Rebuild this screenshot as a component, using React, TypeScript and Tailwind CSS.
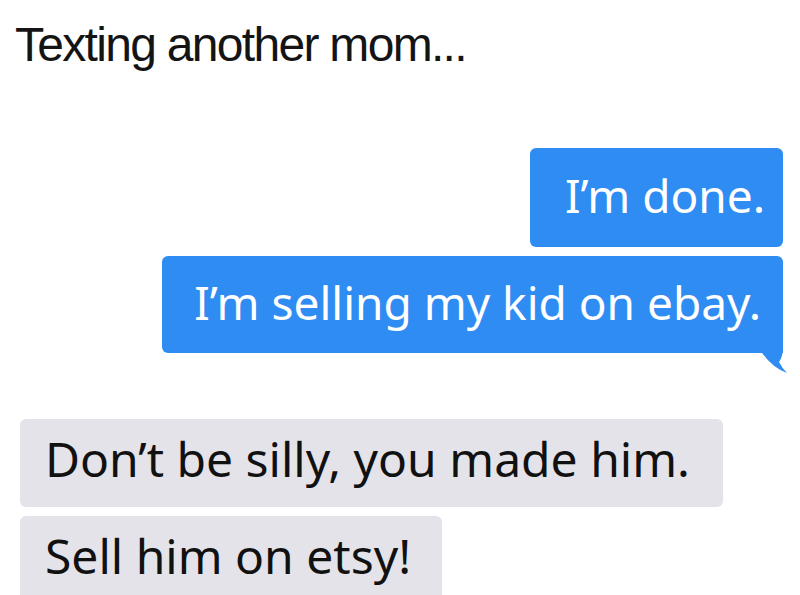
import React from "react";

const bubbleFont = { fontFamily: '"Noto Sans", "Open Sans", sans-serif' };

export default function App() {
  return (
    <div className="w-[800px] h-[595px] overflow-hidden bg-white">
      <div
        className="pl-[15px] pt-[21px] text-[48px] leading-[48px] tracking-[-1.7px] text-[#141414]"
        style={{ fontFamily: '"Liberation Sans", Arial, sans-serif' }}
      >
        Texting another mom...
      </div>

      <div className="mt-[79px] flex flex-col items-end pr-[17px] gap-[9px]" style={bubbleFont}>
        <div className="w-[253px] h-[99px] rounded-[6px] bg-[#2f8cf3] flex items-center justify-end pr-[18px] pb-[4px] text-white text-[46px]">
          I’m done.
        </div>
        <div className="relative w-[621px] h-[97px] rounded-[6px] rounded-br-none bg-[#2f8cf3] flex items-center justify-end pr-[22px] pb-[4px] text-white text-[46px]">
          <span>I’m selling my kid on ebay.</span>
          <svg
            className="absolute left-[594px] top-[84px]"
            width="32"
            height="36"
            viewBox="0 0 32 36"
          >
            <path d="M0 0 L27 0 L27 10 Q26 18 23 22 Q26 28 31 33 Q17 28 6 13 L0 13 Z" fill="#2f8cf3" />
          </svg>
        </div>
      </div>

      <div className="mt-[66px] flex flex-col items-start pl-[20px] gap-[9px]" style={bubbleFont}>
        <div className="w-[703px] h-[88px] rounded-[6px] bg-[#e4e3e9] flex items-center pl-[25px] pb-[9px] text-[#111] text-[48px]">
          Don’t be silly, you made him.
        </div>
        <div className="w-[422px] h-[88px] rounded-[6px] bg-[#e4e3e9] flex items-center pl-[25px] pb-[9px] text-[#111] text-[48px]">
          Sell him on etsy!
        </div>
      </div>
    </div>
  );
}
